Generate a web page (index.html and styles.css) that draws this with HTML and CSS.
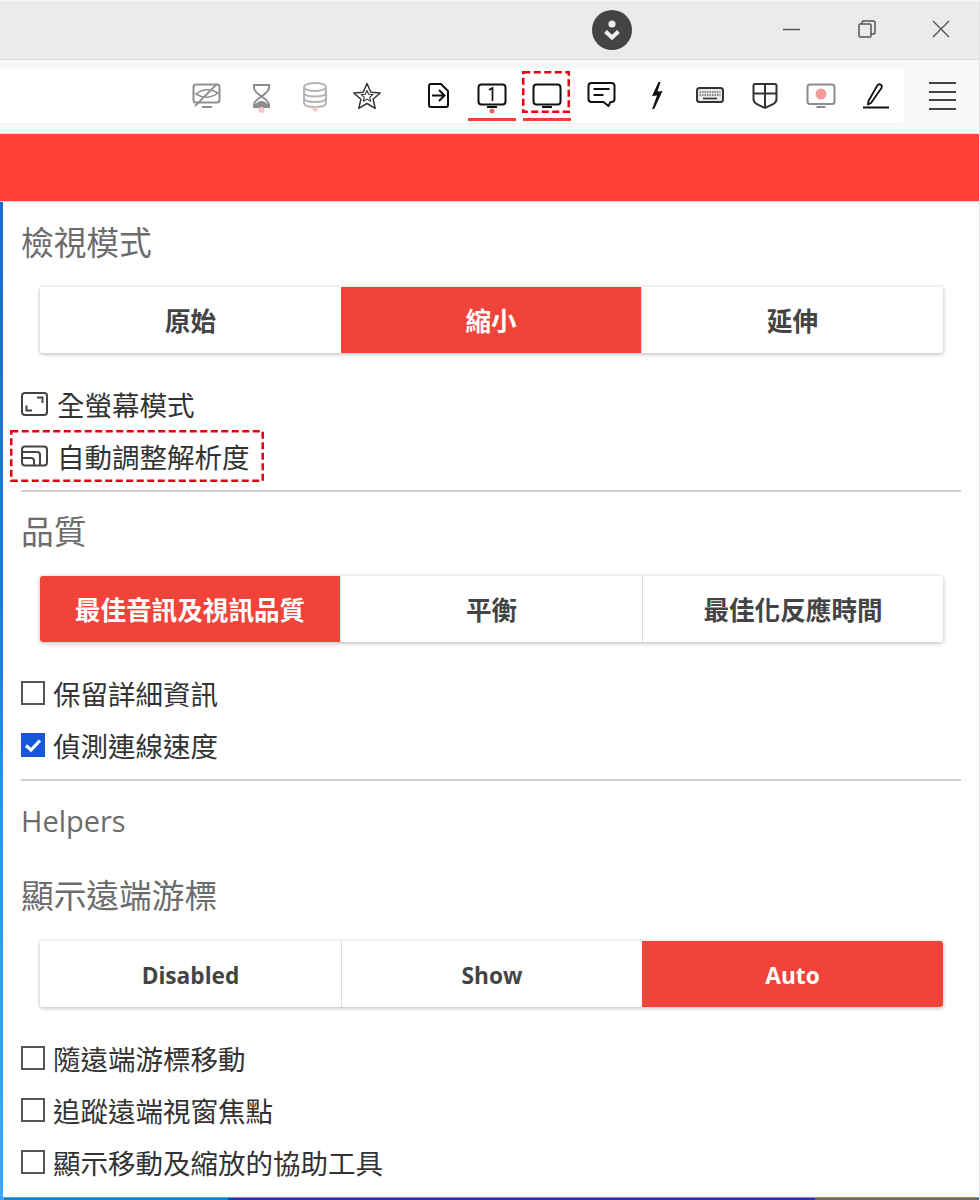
FILE: index.html
```html
<!DOCTYPE html>
<html lang="zh-Hant">
<head>
<meta charset="utf-8">
<title>檢視模式</title>
<link rel="stylesheet" href="styles.css">
</head>
<body>
<div class="page">
  <header class="titlebar">
    <svg class="badge" width="40" height="40" viewBox="0 0 40 40"><circle cx="20" cy="20" r="20" fill="#444"/><circle cx="20" cy="14" r="3.6" fill="#eee"/><path d="M13.5 21.5 20 27.5l6.500-6" fill="none" stroke="#eee" stroke-width="4"/></svg>
    <div class="winctl">
      <svg width="18" height="18" viewBox="0 0 18 18"><path d="M0 9.500h17" stroke="#555" stroke-width="1.500"/></svg>
      <svg width="18" height="18" viewBox="0 0 18 18" fill="none" stroke="#555" stroke-width="1.500"><rect x="1" y="4" width="12" height="13" rx="1"/><path d="M4 4V2.500Q4 1 5.500 1h10q1.500 0 1.500 1.500v10q0 1.500-1.500 1.500H13"/></svg>
      <svg width="18" height="18" viewBox="0 0 18 18"><path d="M1 1l16 16M17 1 1 17" stroke="#555" stroke-width="1.400"/></svg>
    </div>
  </header>
  <nav class="toolbar">
    <div class="panel">
      <div class="tool"><svg viewBox="-3 0 54 55" fill="none" stroke="#8f8f8f" stroke-width="2"><rect x="14.500" y="16.500" width="26" height="18" rx="2.500"/><path d="M23 39h10"/><path d="M17 26q11-8 22-1-11 8-22 1z" stroke-width="1.500"/><path d="M38 16 16 38" stroke-width="1.800"/></svg></div>
      <div class="tool"><svg viewBox="-3 0 54 55" fill="none" stroke="#8c8c8c" stroke-width="2"><path d="M19 17h17M19 39h17M20 17v3q0 3 7.500 8.500Q35 23 35 20v-3M20 39v-2q0-4 7.500-8.500Q35 33 35 37v2"/><path d="M21 38q6.500-8 13 0z" fill="#8c8c8c"/><circle cx="27.500" cy="42" r="3" fill="#f9c4c4" stroke="none"/></svg></div>
      <div class="tool"><svg viewBox="-3 0 54 55" fill="none" stroke="#b5b5b5" stroke-width="2"><ellipse cx="27" cy="19" rx="11" ry="4"/><path d="M16 19v16q0 4 11 4t11-4V19M16 24.500q0 4 11 4t11-4M16 30q0 4 11 4t11-4"/><circle cx="27" cy="41" r="2.500" fill="#f9c4c4" stroke="none"/></svg></div>
      <div class="tool"><svg viewBox="0 0 54 55" fill="none" stroke="#333" stroke-linejoin="round"><path d="M27 15.500l3.800 8.700 9.400.800-7.100 6.200 2.100 9.200L27 35.500l-8.200 4.900 2.100-9.200-7.100-6.200 9.400-.800z" stroke-width="1.500"/><path d="M27 22.500l1.700 3.800 4.100.300-3.100 2.700 1 4-3.700-2.200-3.700 2.200 1-4-3.100-2.700 4.100-.300z" stroke-width="1.100"/></svg></div>
      <div class="tool gap"><svg viewBox="-1 0 54 55" fill="none" stroke="#111" stroke-width="2"><path d="M20 16h10l7 7v14q0 2-2 2H20q-2 0-2-2V18q0-2 2-2z" stroke-linejoin="round"/><path d="M21 27.500h12M28 22l5.500 5.500L28 33"/></svg></div>
      <div class="tool"><svg viewBox="0 0 54 55" fill="none" stroke="#111" stroke-width="2"><rect x="13.500" y="16.500" width="27" height="20" rx="3"/><path d="M22 39h10"/><path d="M24 22l3.500-2v13" stroke-width="1.700"/><circle cx="27" cy="43" r="2.500" fill="#f0625c" stroke="none"/></svg><i class="under"></i></div>
      <div class="tool"><svg viewBox="0 0 54 55" fill="none" stroke="#111" stroke-width="2"><rect x="13.500" y="16.500" width="27" height="20" rx="3"/><path d="M22 39h10"/></svg><i class="under"></i><svg class="dashbox" viewBox="0 0 48 42" fill="none"><rect x="1.250" y="1.250" width="45.500" height="39.500" stroke="#e60012" stroke-width="2.500" stroke-dasharray="7 3.500"/></svg></div>
      <div class="tool"><svg viewBox="0.500 0 54 55" fill="none" stroke="#111" stroke-width="2"><path d="M17 15h20q3 0 3 3v13q0 3-3 3h-1l-2 4-5-4H17q-3 0-3-3V18q0-3 3-3z" stroke-linejoin="round"/><path d="M19 21h16M19 27h10"/></svg></div>
      <div class="tool"><svg viewBox="0.500 0 54 55"><path d="M29 14l-6.500 14 5-.5-5 14 2.500-1 8-17.500-5 .5 3-9.500z" fill="#111"/></svg></div>
      <div class="tool"><svg viewBox="1 0 54 55" fill="none" stroke="#333"><rect x="14" y="20" width="26" height="14" rx="2.500" stroke-width="2" fill="#e8e8e8"/><path d="M16.500 24h21M16.500 27h21" stroke="#666" stroke-width="1.600" stroke-dasharray="1.500 1"/><path d="M20 30.500h14" stroke-width="1.600"/></svg></div>
      <div class="tool"><svg viewBox="1 0 54 55" fill="none" stroke="#333" stroke-width="2"><path d="M17 16h20q1.500 0 1.500 1.500V31q0 3-3 5L27 40l-8.500-4q-3-2-3-5V17.500Q15.500 16 17 16zM27 16v24M15.500 25.500h23"/></svg></div>
      <div class="tool"><svg viewBox="0.500 0 54 55" fill="none" stroke="#8c8c8c" stroke-width="2"><rect x="14" y="16.500" width="27" height="19.500" rx="2.500"/><path d="M23 39h9"/><circle cx="27.500" cy="26" r="5.500" fill="#f49a9a" stroke="none"/></svg></div>
      <div class="tool"><svg viewBox="0 0 54 55" fill="none" stroke="#111"><path d="M14 39.500h26" stroke-width="2"/><path d="M28 18q1.500-2.500 3.500-1.500t1 3.500L22 35l-3 1.500.5-3.500z" stroke-width="1.800" stroke-linejoin="round"/></svg></div>
    </div>
    <div class="menu"><span></span><span></span><span></span><span></span></div>
  </nav>
  <div class="banner"></div>
  <main class="content">
    <h2 class="heading first">檢視模式</h2>
    <div class="seg seg-a">
      <button class="opt">原始</button>
      <button class="opt on">縮小</button>
      <button class="opt">延伸</button>
    </div>
    <div class="row rows-start">
      <svg class="ico" width="27" height="26" viewBox="0 0 27 26" fill="none" stroke="#444" stroke-width="2"><rect x="1" y="2" width="25" height="22" rx="3"/><path d="M16 6.500h5.500V12M5.500 14.500v5H11"/></svg>
      <span>全螢幕模式</span>
    </div>
    <div class="row">
      <svg class="ico" width="27" height="26" viewBox="0 0 27 26" fill="none" stroke="#444" stroke-width="2"><rect x="1" y="3.500" width="25" height="19" rx="3"/><path d="M1 9h15q3 0 3 3v10.500M1 15h9q3 0 3 3v4.500"/></svg>
      <span>自動調整解析度</span>
      <svg class="dashrow" viewBox="0 0 254 52" fill="none"><rect x="1.250" y="1.250" width="251.500" height="49.500" stroke="#e60012" stroke-width="2.500" stroke-dasharray="7 3.500"/></svg>
    </div>
    <hr class="rule">
    <h2 class="heading">品質</h2>
    <div class="seg seg-b">
      <button class="opt on">最佳音訊及視訊品質</button>
      <button class="opt">平衡</button>
      <button class="opt">最佳化反應時間</button>
    </div>
    <label class="row rows-start"><i class="box"></i><span>保留詳細資訊</span></label>
    <label class="row"><i class="box checked"><svg width="20" height="20" viewBox="0 0 20 20" fill="none" stroke="#fff" stroke-width="3.200"><path d="M3 10.500l5 4.500 9-9.500"/></svg></i><span>偵測連線速度</span></label>
    <hr class="rule">
    <h3 class="helpers">Helpers</h3>
    <h2 class="heading cursor">顯示遠端游標</h2>
    <div class="seg">
      <button class="opt latin">Disabled</button>
      <button class="opt latin">Show</button>
      <button class="opt latin on">Auto</button>
    </div>
    <label class="row rows-start"><i class="box"></i><span>隨遠端游標移動</span></label>
    <label class="row"><i class="box"></i><span>追蹤遠端視窗焦點</span></label>
    <label class="row"><i class="box"></i><span>顯示移動及縮放的協助工具</span></label>
  </main>
  <div class="taskstrip"></div>
</div>
</body>
</html>
```
FILE: styles.css
```css
* { box-sizing: border-box; }
html, body { margin: 0; padding: 0; background: #fff; }
body { font-family: "Open Sans", "Noto Sans CJK TC", sans-serif; color: #333; }
.page { width: 980px; height: 1200px; overflow: hidden; display: flex; flex-direction: column; border-top: 1px solid #f6f6f6; border-right: 1px solid #e4e4e4; }

.titlebar { height: 59px; background: #ebebeb; border-bottom: 1px solid #dcdcdc; flex: none; display: flex; align-items: center; padding-left: 592px; }
.badge { display: block; margin-top: -1px; }
.winctl { margin-left: 151px; width: 167px; display: flex; justify-content: space-between; margin-top: -2px; }
.winctl svg { display: block; }

.toolbar { height: 74px; flex: none; background: #f8f8f8; display: flex; padding-top: 8px; border-bottom: 1px solid #e2e2e2; }
.panel { width: 904px; height: 55px; flex: none; background: #fff; border-radius: 0 4px 4px 0; display: flex; justify-content: flex-end; padding-right: 0.570px; box-shadow: 0 1px 2px rgba(0,0,0,.03); }
.tool { width: 54.860px; height: 55px; position: relative; flex: none; }
.tool > svg { display: block; width: 54px; height: 55px; margin: 0 auto; }
.tool.gap { margin-left: 15px; }
.under { position: absolute; left: 3.430px; width: 48px; top: 50px; height: 3px; background: #ee3f3a; }
.tool > svg.dashbox { position: absolute; left: 2.930px; top: 3px; width: 48px; height: 42px; }
.menu { width: 75px; height: 55px; flex: none; display: flex; flex-direction: column; align-items: center; padding: 14px 0 0 2px; gap: 6.500px; }
.menu span { display: block; width: 27px; height: 2px; background: #444; flex: none; }

.banner { height: 68px; flex: none; background: #ff4138; border-bottom: 1px solid #dedede; }

.content { flex: 1; min-height: 0; padding: 0 18px; border-left: 3px solid; border-image: linear-gradient(180deg, #1f6bc9 0%, #1c7ce6 45%, #2a92f5 60%, #3aa8ff 100%) 1; border-bottom: 1px solid #d8d8d8; position: relative; }
.taskstrip { height: 2px; flex: none; background: linear-gradient(90deg, #3aa8ff 0, #3aa8ff 4px, #2f7aa6 4px, #2f7aa6 228px, #213f7a 228px, #213f7a 815px, #6e6a66 815px); }

.heading { margin: 15px 0 0; height: 50px; line-height: 50px; font-size: 32.700px; font-weight: 400; color: #6c6c6c; }
.heading.first { margin-top: 16px; }
.heading.cursor { margin-top: 24px; }
.helpers { margin: 15px 0 0; height: 50px; line-height: 50px; font-size: 29px; font-weight: 400; color: #6c6c6c; }
.helpers + .heading.cursor { margin-top: 25px; }

.seg { margin: 19px 0 0 19px; width: 903px; height: 66px; display: grid; grid-template-columns: repeat(3, 1fr); background: #fff; border-radius: 3px; box-shadow: 0 1px 4px rgba(0,0,0,.3); overflow: hidden; }
.seg-a { grid-template-columns: 301px 300px 302px; }
.seg-b { grid-template-columns: 300px 302px 301px; }
.heading.cursor + .seg { margin-top: 20px; }
.opt { border: 0; border-left: 1px solid #ddd; background: #fff; font: 700 25.600px "Open Sans", "Noto Sans CJK TC", sans-serif; color: #444; padding: 0; }
.opt.latin { font-size: 22.700px; padding-top: 2px; }
.opt:first-child { border-left: 0; }
.opt.on { background: #f0433a; color: #fff; border-left: 0; }

.row { height: 52px; display: flex; align-items: center; font-size: 27.500px; color: #333; position: relative; padding-bottom: 3px; }
.rows-start { margin-top: 26px; }
.ico { flex: none; margin-right: 9px; display: block; }
.box { width: 24px; height: 24px; border: 2px solid #555; background: #fff; flex: none; margin: 0 8px 0 0; display: block; }
.box.checked { background: #1558d6; border-color: #1558d6; display: flex; align-items: center; justify-content: center; }
.box.checked svg { display: block; }
.dashrow { position: absolute; left: -11px; top: -1px; width: 254px; height: 52px; }
.rule { margin: 7px 0 0; border: 0; height: 2px; background: #cfcfcf; width: 940px; }
```
